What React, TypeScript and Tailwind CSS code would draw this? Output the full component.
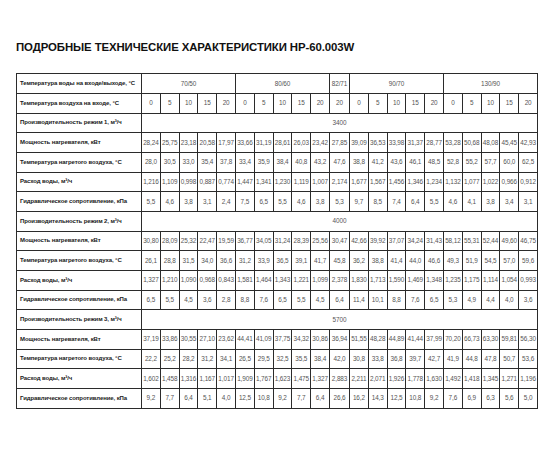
import React from 'react';

type Row = { label: string; values: string[] };
type Mode = { label: string; flow: string; rows: Row[] };

const groups = [
  { title: '70/50', span: 5 },
  { title: '80/60', span: 5 },
  { title: '82/71', span: 1 },
  { title: '90/70', span: 5 },
  { title: '130/90', span: 5 },
];

const airTemps = ['0', '5', '10', '15', '20', '0', '5', '10', '15', '20', '20', '0', '5', '10', '15', '20', '0', '5', '10', '15', '20'];

const split = (s: string) => s.split(' ');

const modes: Mode[] = [
  {
    label: 'Производительность режим 1, м³/ч',
    flow: '3400',
    rows: [
      { label: 'Мощность нагревателя, кВт', values: split('28,24 25,75 23,18 20,58 17,97 33,66 31,19 28,61 26,03 23,42 27,85 39,09 36,53 33,98 31,37 28,77 53,28 50,68 48,08 45,45 42,93') },
      { label: 'Температура нагретого воздуха, °С', values: split('28,0 30,5 33,0 35,4 37,8 33,4 35,9 38,4 40,8 43,2 47,6 38,8 41,2 43,6 46,1 48,5 52,8 55,2 57,7 60,0 62,5') },
      { label: 'Расход воды, м³/ч', values: split('1,216 1,109 0,998 0,887 0,774 1,447 1,341 1,230 1,119 1,007 2,174 1,677 1,567 1,456 1,346 1,234 1,132 1,077 1,022 0,966 0,912') },
      { label: 'Гидравлическое сопротивление, кПа', values: split('5,5 4,6 3,8 3,1 2,4 7,5 6,5 5,5 4,6 3,8 5,3 9,7 8,5 7,4 6,4 5,5 4,6 4,1 3,8 3,4 3,1') },
    ],
  },
  {
    label: 'Производительность режим 2, м³/ч',
    flow: '4000',
    rows: [
      { label: 'Мощность нагревателя, кВт', values: split('30,80 28,09 25,32 22,47 19,59 36,77 34,05 31,24 28,39 25,56 30,47 42,66 39,92 37,07 34,24 31,43 58,12 55,31 52,44 49,60 46,75') },
      { label: 'Температура нагретого воздуха, °С', values: split('26,1 28,8 31,5 34,0 36,6 31,2 33,9 36,5 39,1 41,7 45,8 36,2 38,8 41,4 44,0 46,6 49,3 51,9 54,5 57,0 59,6') },
      { label: 'Расход воды, м³/ч', values: split('1,327 1,210 1,090 0,968 0,843 1,581 1,464 1,343 1,221 1,099 2,378 1,830 1,713 1,590 1,469 1,348 1,235 1,175 1,114 1,054 0,993') },
      { label: 'Гидравлическое сопротивление, кПа', values: split('6,5 5,5 4,5 3,6 2,8 8,8 7,6 6,5 5,5 4,5 6,4 11,4 10,1 8,8 7,6 6,5 5,3 4,9 4,4 4,0 3,6') },
    ],
  },
  {
    label: 'Производительность режим 3, м³/ч',
    flow: '5700',
    rows: [
      { label: 'Мощность нагревателя, кВт', values: split('37,19 33,86 30,55 27,10 23,62 44,41 41,09 37,75 34,32 30,86 36,94 51,55 48,28 44,89 41,44 37,99 70,20 66,73 63,30 59,81 56,30') },
      { label: 'Температура нагретого воздуха, °С', values: split('22,2 25,2 28,2 31,2 34,1 26,5 29,5 32,5 35,5 38,4 42,0 30,8 33,8 36,8 39,7 42,7 41,9 44,8 47,8 50,7 53,6') },
      { label: 'Расход воды, м³/ч', values: split('1,602 1,458 1,316 1,167 1,017 1,909 1,767 1,623 1,475 1,327 2,883 2,211 2,071 1,926 1,778 1,630 1,492 1,418 1,345 1,271 1,196') },
      { label: 'Гидравлическое сопротивление, кПа', values: split('9,2 7,7 6,4 5,1 4,0 12,5 10,8 9,2 7,7 6,4 26,6 16,2 14,3 12,5 10,8 9,2 7,6 6,9 6,3 5,6 5,0') },
    ],
  },
];

const labelCell = 'border border-[#2b2b2b] pl-[3px] text-left font-bold text-[6px] text-[#1a1a1a] whitespace-nowrap tracking-[-0.1px]';
const valueCell = 'border border-[#2b2b2b] text-center text-[6.4px] text-[#555] whitespace-nowrap tracking-[-0.1px]';

export default function App() {
  return (
    <div className="w-[550px] h-[450px] bg-white pt-[40px] pl-[16px] font-['Liberation_Sans',Arial,sans-serif]">
      <h1 className="text-[11.4px] leading-[14px] font-bold text-[#111] tracking-[-0.1px]">
        ПОДРОБНЫЕ ТЕХНИЧЕСКИЕ ХАРАКТЕРИСТИКИ HP-60.003W
      </h1>

      <table className="mt-[19px] w-[521px] table-fixed border-collapse border-[1.5px] border-[#222]">
        <colgroup>
          <col className="w-[125px]" />
          {airTemps.map((_, i) => (
            <col key={i} className={i === 10 ? 'w-[20px]' : 'w-[18.8px]'} />
          ))}
        </colgroup>
        <tbody>
          {/* Шапка */}
          <tr className="h-[20px]">
            <td className={labelCell}>Температура воды на входе/выходе, °С</td>
            {groups.map((g) => (
              <td key={g.title} colSpan={g.span} className={valueCell}>
                {g.title}
              </td>
            ))}
          </tr>
          <tr className="h-[19.6px]">
            <td className={labelCell}>Температура воздуха на входе, °С</td>
            {airTemps.map((t, i) => (
              <td key={i} className={valueCell}>
                {t}
              </td>
            ))}
          </tr>

          {modes.map((mode) => (
            <React.Fragment key={mode.label}>
              <tr className="h-[19.6px]">
                <td className={labelCell}>{mode.label}</td>
                <td colSpan={21} className={valueCell}>
                  {mode.flow}
                </td>
              </tr>
              {mode.rows.map((row) => (
                <tr key={row.label} className="h-[19.7px]">
                  <td className={labelCell}>{row.label}</td>
                  {row.values.map((v, i) => (
                    <td key={i} className={valueCell}>
                      {v}
                    </td>
                  ))}
                </tr>
              ))}
            </React.Fragment>
          ))}
        </tbody>
      </table>
    </div>
  );
}
